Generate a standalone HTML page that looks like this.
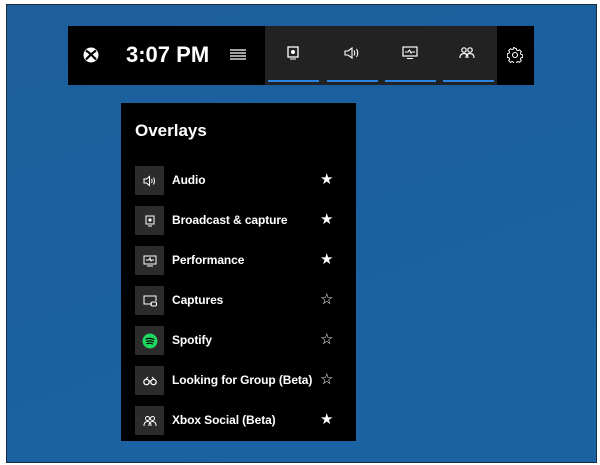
<!DOCTYPE html>
<html><head><style>
*{margin:0;padding:0;box-sizing:border-box}
body{width:600px;height:465px;background:#fff;position:relative;overflow:hidden;font-family:"Liberation Sans",sans-serif;color:#fff}
#bg{position:absolute;left:6px;top:4px;width:591px;height:459px;border:1.5px solid #1a2a3a;background:linear-gradient(160deg,#1e5f9c 0%,#1a609f 40%,#1b64a4 100%)}
#bar{position:absolute;left:68px;top:26px;width:466px;height:59px;background:#000}
#gray{position:absolute;left:197px;top:0;width:232px;height:59px;background:#222}
.ul{position:absolute;top:54px;height:2px;background:#2a86e0;width:51px}
.ic{position:absolute;top:20px}
#time{position:absolute;left:58px;top:16px;font-size:22px;font-weight:bold}
#panel{position:absolute;left:121px;top:103px;width:235px;height:338px;background:#000}
h1{position:absolute;left:14px;top:18px;font-size:17px;font-weight:bold}
.row{position:absolute;left:14px;height:29px;width:210px}
.box{position:absolute;left:0;top:0;width:29px;height:29px;background:#2b2b2b;display:flex;align-items:center;justify-content:center}
.lbl{position:absolute;left:37px;top:7px;font-size:12px;font-weight:bold;letter-spacing:-0.1px}
.st{position:absolute;left:185px;top:4px;font-size:15px}
</style></head><body>
<div id="bg"></div>
<div id="bar">
<svg style="position:absolute;left:15px;top:21px" width="16" height="16" viewBox="0 0 16 16"><circle cx="8" cy="8" r="7.5" fill="#fff"/><path d="M3 3.5Q8 7 13 12.5M13 3.5Q8 7 3 12.5" stroke="#000" stroke-width="2.2" fill="none"/></svg>
<div id="time">3:07 PM</div>
<svg style="position:absolute;left:162px;top:23px" width="16" height="12"><g stroke="#fff" stroke-width="1.2"><path d="M0 1h16M0 4h16M0 7h16M0 10h16"/></g></svg>
<div id="gray">
<svg class="ic" style="left:22px" width="12" height="14"><rect x="1" y="1" width="10" height="10" fill="none" stroke="#fff" stroke-width="1.3"/><circle cx="6" cy="6" r="2" fill="#fff"/><path d="M3 13h6" stroke="#fff"/></svg>
<svg class="ic" style="left:79px" width="16" height="14"><path d="M1 5h3l4-3v10l-4-3H1z" fill="none" stroke="#fff" stroke-width="1.1"/><path d="M10 4.5q1.5 2.5 0 5M12.5 3q2.5 4 0 8" stroke="#fff" fill="none" stroke-width="1.1"/></svg>
<svg class="ic" style="left:137px" width="16" height="14"><rect x="1" y="1" width="14" height="9" fill="none" stroke="#fff" stroke-width="1.2"/><path d="M3 6h3l1.5-2 1.5 3 1-1h3M5 12.5h6" stroke="#fff" fill="none"/></svg>
<svg class="ic" style="left:194px" width="16" height="14"><circle cx="5" cy="4" r="2.2" fill="none" stroke="#fff" stroke-width="1.2"/><circle cx="11" cy="4" r="2.2" fill="none" stroke="#fff" stroke-width="1.2"/><path d="M1 12q0-4.5 4-4.5t4 4.5M7 12q0-4.5 4-4.5t4 4.5" fill="none" stroke="#fff" stroke-width="1.2"/></svg>
<div class="ul" style="left:3px"></div><div class="ul" style="left:62px"></div><div class="ul" style="left:120px"></div><div class="ul" style="left:178px"></div>
</div>
<svg style="position:absolute;left:439px;top:21px" width="16" height="16" viewBox="0 0 16 16"><circle cx="8" cy="8" r="2.5" fill="none" stroke="#fff" stroke-width="1.1"/><path d="M8 1.2l1.3.2.4 1.7 1.3.6 1.5-.9 1.8 1.8-.9 1.5.6 1.3 1.7.4v2.6l-1.7.4-.6 1.3.9 1.5-1.8 1.8-1.5-.9-1.3.6-.4 1.7H6.7l-.4-1.7-1.3-.6-1.5.9-1.8-1.8.9-1.5-.6-1.3-1.7-.4V6.7l1.7-.4.6-1.3-.9-1.5 1.8-1.8 1.5.9 1.3-.6.4-1.7z" fill="none" stroke="#fff" stroke-width="1"/></svg>
</div>
<div id="panel">
<h1>Overlays</h1>
<div class="row" style="top:63px"><div class="box"><svg width="14" height="12"><path d="M1 4h2.5l3-2.5v9l-3-2.5H1z" fill="none" stroke="#fff"/><path d="M8.5 4q1.2 2 0 4M10.5 2.5q2 3.5 0 7" stroke="#fff" fill="none"/></svg></div><div class="lbl">Audio</div><div class="st">★</div></div>
<div class="row" style="top:103px"><div class="box"><svg width="10" height="12"><rect x="1" y="1" width="8" height="8" fill="none" stroke="#fff"/><circle cx="5" cy="5" r="1.6" fill="#fff"/><path d="M3 11h4" stroke="#fff"/></svg></div><div class="lbl">Broadcast &amp; capture</div><div class="st">★</div></div>
<div class="row" style="top:143px"><div class="box"><svg width="14" height="12"><rect x="1" y="1" width="12" height="8" fill="none" stroke="#fff"/><path d="M3 5h3l1-2 1 3 1-1h2M4 11h6" stroke="#fff" fill="none"/></svg></div><div class="lbl">Performance</div><div class="st">★</div></div>
<div class="row" style="top:183px"><div class="box"><svg width="14" height="12"><path d="M9 9H1V1h12v5" fill="none" stroke="#fff"/><rect x="8" y="7" width="5.5" height="4" rx="1.5" fill="none" stroke="#fff"/></svg></div><div class="lbl">Captures</div><div class="st">☆</div></div>
<div class="row" style="top:223px"><div class="box"><svg width="16" height="16"><circle cx="8" cy="8" r="7.5" fill="#1ed760"/><path d="M4 6q4-1.5 8 .5M4.5 8.3q3.5-1 7 .5M5 10.5q3-.8 5.5.4" stroke="#000" stroke-width="1.2" fill="none" stroke-linecap="round"/></svg></div><div class="lbl">Spotify</div><div class="st">☆</div></div>
<div class="row" style="top:263px"><div class="box"><svg width="14" height="10"><circle cx="3.5" cy="6" r="2.7" fill="none" stroke="#fff" stroke-width="1.2"/><circle cx="10.5" cy="6" r="2.7" fill="none" stroke="#fff" stroke-width="1.2"/><path d="M3 3l2-2M11 3l-2-2M6 5h2" stroke="#fff"/></svg></div><div class="lbl">Looking for Group (Beta)</div><div class="st">☆</div></div>
<div class="row" style="top:303px"><div class="box"><svg width="14" height="12"><circle cx="4.5" cy="3.5" r="2" fill="none" stroke="#fff"/><circle cx="9.5" cy="3.5" r="2" fill="none" stroke="#fff"/><path d="M1 11q0-4.5 3.5-4.5t3.5 4.5M6 11q0-4.5 3.5-4.5t3.5 4.5" fill="none" stroke="#fff"/></svg></div><div class="lbl">Xbox Social (Beta)</div><div class="st">★</div></div>
</div>
</body></html>
